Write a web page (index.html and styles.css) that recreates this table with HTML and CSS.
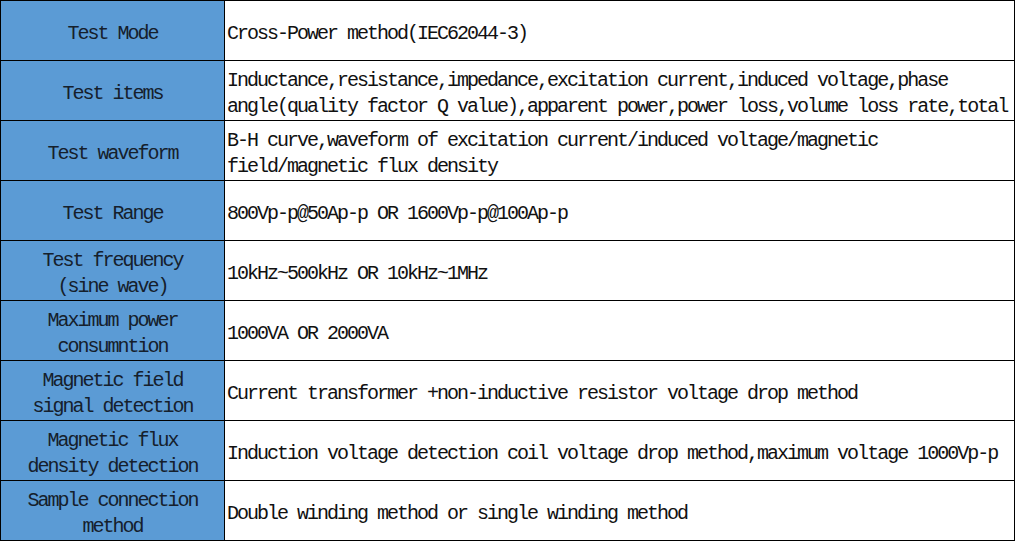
FILE: index.html
```html
<!DOCTYPE html>
<html>
<head>
<meta charset="utf-8">
<link rel="stylesheet" href="styles.css">
</head>
<body>
<table class="spec">
  <colgroup><col class="c-head"><col class="c-val"></colgroup>
  <tbody>
    <tr><th>Test Mode</th><td>Cross-Power method(IEC62044-3)</td></tr>
    <tr><th>Test items</th><td>Inductance,resistance,impedance,excitation current,induced voltage,phase angle(quality factor Q value),apparent power,power loss,volume loss rate,total</td></tr>
    <tr><th>Test waveform</th><td>B-H curve,waveform of excitation current/induced voltage/magnetic field/magnetic flux density</td></tr>
    <tr><th>Test Range</th><td>800Vp-p@50Ap-p OR 1600Vp-p@100Ap-p</td></tr>
    <tr><th>Test frequency (sine wave)</th><td>10kHz~500kHz OR 10kHz~1MHz</td></tr>
    <tr><th>Maximum power consumntion</th><td>1000VA OR 2000VA</td></tr>
    <tr><th>Magnetic field signal detection</th><td>Current transformer +non-inductive resistor voltage drop method</td></tr>
    <tr><th>Magnetic flux density detection</th><td>Induction voltage detection coil voltage drop method,maximum voltage 1000Vp-p</td></tr>
    <tr><th>Sample connection method</th><td>Double winding method or single winding method</td></tr>
  </tbody>
</table>
</body>
</html>
```
FILE: styles.css
```css
html, body {
  margin: 0;
  padding: 0;
  background: #ffffff;
}

.spec {
  border-collapse: collapse;
  table-layout: fixed;
  width: 1015px;
  font-family: "Liberation Mono", "Noto Sans CJK SC", monospace;
  font-size: 20px;
  letter-spacing: -2px;
  line-height: 26px;
  color: #111111;
}

.c-head { width: 224px; }

.spec tr { height: 60px; }

.spec th,
.spec td {
  border: 1px solid #000000;
  vertical-align: middle;
  font-weight: normal;
  padding: 0;
}

.spec th {
  background: #5b9bd5;
  color: #15202c;
  text-align: center;
  padding: 7px 14px 0;
}

.spec td {
  text-align: left;
  padding: 7px 0 0 2px;
}
```
